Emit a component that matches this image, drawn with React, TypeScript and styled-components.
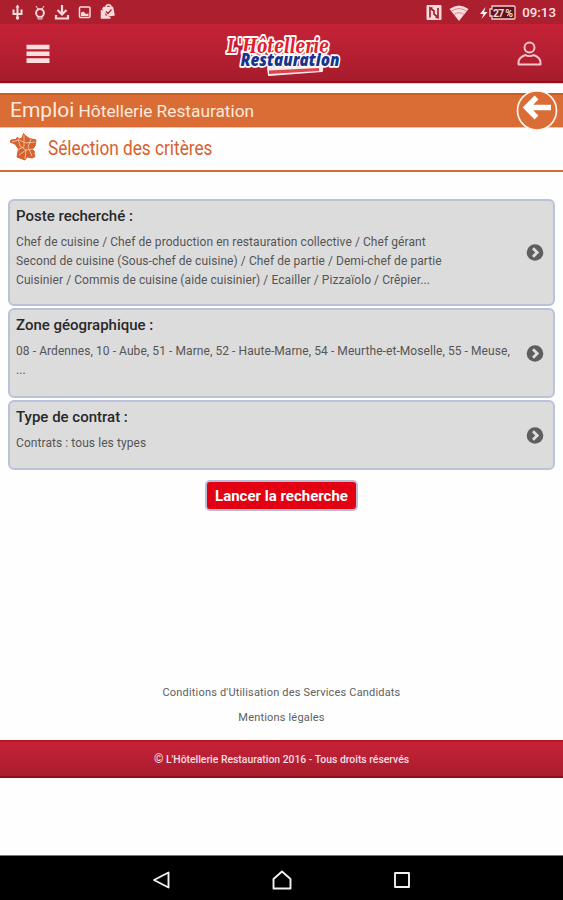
import React from 'react';
import styled, { createGlobalStyle } from 'styled-components';

const GlobalStyle = createGlobalStyle`
  * { box-sizing: border-box; }
  body { margin: 0; background: #fff; font-family: Roboto, sans-serif; }
  svg { display: block; flex: none; }
`;

const Screen = styled.div`
  width: 563px;
  height: 900px;
  display: flex;
  flex-direction: column;
  overflow: hidden;
  background: #fefefe;
`;

const StatusBar = styled.div`
  height: 24px;
  flex: none;
  display: flex;
  align-items: center;
  justify-content: space-between;
  padding: 0 7px 0 9px;
  background: #ab1f2e;
`;

const Clock = styled.span`
  padding-top: 2px;
  color: #fbe3e5;
  font-size: 13.3px;
  font-weight: 500;
  line-height: 24px;
`;

const Header = styled.header`
  height: 60px;
  flex: none;
  display: flex;
  align-items: center;
  justify-content: space-between;
  padding: 0 20px 0 26px;
  background: linear-gradient(#c62237, #a51c2c);
  border-bottom: 1px solid #f6c9cc;
  box-shadow: inset 0 -2px 0 #960f18;
`;

const TitleBar = styled.div`
  height: 35px;
  flex: none;
  margin-top: 9px;
  display: flex;
  align-items: center;
  justify-content: space-between;
  padding: 0 5px 0 10px;
  background: #d96d35;
  border-top: 2px solid #cd5a1f;
  border-bottom: 1px solid #f3c3a8;
`;

const Title = styled.h1`
  margin: -2px 0 0;
  color: #fdeade;
  font-size: 21px;
  line-height: 32px;
  font-weight: 400;
`;

const TitleSmall = styled.span`
  margin-left: -1px;
  font-size: 17.3px;
`;

const SectionBar = styled.div`
  height: 44px;
  flex: none;
  display: flex;
  align-items: center;
  gap: 11px;
  padding: 0 10px 4px;
  border-bottom: 2px solid #d66a3a;
`;

const SectionTitle = styled.h2`
  margin: 2px 0 0;
  color: #d5622c;
  font-size: 20px;
  line-height: 36px;
  font-weight: 400;
  transform: scaleX(0.86);
  transform-origin: left;
  white-space: nowrap;
`;

const Criteria = styled.main`
  display: flex;
  flex-direction: column;
  gap: 2px;
  padding: 27px 8px 0;
`;

const Card = styled.button<{ $height: number }>`
  height: ${(p) => p.$height}px;
  display: flex;
  align-items: center;
  justify-content: space-between;
  padding: 0 9px 0 6px;
  border: 2px solid #bac2d9;
  border-radius: 6px;
  background: #dcdcdc;
  font-family: inherit;
  text-align: left;
`;

const CardText = styled.div`
  align-self: flex-start;
  padding-top: 5px;
`;

const CardTitle = styled.h3`
  margin: 0 0 6px;
  color: #292929;
  font-size: 15px;
  line-height: 21px;
  font-weight: 500;
`;

const CardLine = styled.div`
  color: #555;
  font-size: 12px;
  line-height: 19px;
  letter-spacing: 0.075px;
  white-space: nowrap;
`;

const SearchButton = styled.button`
  align-self: center;
  width: 153px;
  height: 31px;
  margin-top: 8px;
  padding: 0;
  border: 2px solid #b9bfd6;
  border-radius: 5px;
  background: #e30013;
  color: #fff;
  font-family: inherit;
  font-size: 15px;
  font-weight: 700;
  line-height: 28px;
  white-space: nowrap;
`;

const Links = styled.nav`
  margin-top: 169px;
  display: flex;
  flex-direction: column;
  align-items: center;
`;

const Link = styled.a`
  color: #606060;
  font-size: 11px;
  line-height: 25px;
  letter-spacing: 0.18px;
`;

const Footer = styled.footer`
  height: 38px;
  flex: none;
  margin-top: 10px;
  background: linear-gradient(#c62237, #a91c2e);
  border-top: 2px solid #bd1322;
  border-bottom: 2px solid #980b19;
  color: #f8dfe1;
  font-size: 10.4px;
  font-weight: 500;
  line-height: 34px;
  text-align: center;
`;

const Copyright = styled.span`
  font-size: 12px;
`;

const NavBar = styled.div`
  height: 45px;
  flex: none;
  margin-top: auto;
  display: flex;
  justify-content: space-between;
  align-items: center;
  padding: 3px 151px 0 152px;
  background: #000;
  border-top: 1px solid #777;
`;

const StatusIcons = () => (
  <svg width="110" height="24" viewBox="9 0 110 24" fill="none" stroke="#f8dcdc" strokeWidth="1.5">
    <path d="M17.500 6v13M13.500 9.500v4.500h8V9.500" strokeWidth="2" />
    <path d="M17.500 4.500l2 3h-4z" fill="#f8dcdc" stroke="none" />
    <circle cx="17.500" cy="18" r="1.700" fill="#f8dcdc" stroke="none" />
    <path d="M36 6l2 3M44 6l-2 3M37 9h6M38 17v2h4v-2" strokeWidth="1" />
    <circle cx="40" cy="13" r="3.900" strokeWidth="1.900" />
    <path d="M62 5v9M57.500 10l4.500 4.500 4.500-4.500" strokeWidth="2.200" />
    <path d="M56 15v3.500h12V15" strokeWidth="2.200" />
    <rect x="79.500" y="7" width="10.500" height="10.500" rx="1" />
    <path d="M81 16v-3.500l2.500-1 2.500 2.500 2.500-.5V16z" fill="#f8dcdc" stroke="none" />
    <path d="M104 7.500h8.500l1.500 7.500-9 1.500-2-8zM101.500 10v8h9" fill="#f8dcdc" />
    <path d="M106 7c0-3 5-3 5 0" />
    <path d="M106 11.500l2 2 3.500-4" stroke="#ab1f2e" strokeWidth="1.200" />
  </svg>
);

const StatusRight = styled.div`
  display: flex;
  align-items: center;
  gap: 6px;
`;

const SystemIcons = () => (
  <svg width="91" height="24" viewBox="425 0 91 24">
    <rect x="426.500" y="5" width="15" height="15" rx="1" fill="#f8dcdc" />
    <path d="M430 17.500V8l4 3v3l4 3.500V8M430 8h2.500M438 17.500h-2.500" fill="none" stroke="#ab1f2e" strokeWidth="1.700" />
    <path d="M449.500 9Q459 2 468.500 9L459 21z" fill="#f8dcdc" />
    <path d="M451 11.500q8-6 16 0M454 14.500q5-3.500 10 0" fill="none" stroke="#c9747b" strokeWidth=".8" />
    <path d="M485.500 7l-5.500 7h3.500l-2 5 6-7h-3.500z" fill="#fff" />
    <path d="M492 6h22a1 1 0 0 1 1 1v11a1 1 0 0 1-1 1h-22v-3h-2V9h2z" fill="#63121b" stroke="#f3cfd1" strokeWidth="1.300" />
    <text x="493" y="16.500" fontSize="10.500" fontWeight="700" fontFamily="Roboto" fill="#f5dcdd" textLength="20">27 %</text>
  </svg>
);

const Logo = () => (
  <svg width="136" height="56" viewBox="215 25 136 56" strokeLinejoin="round" paintOrder="stroke" stroke="#fff" fontStyle="italic" fontWeight="800">
    <path d="M267 67l54-2v5l-53 4z" fill="#fbe8e8" stroke="#fbe8e8" strokeWidth="2" />
    <path d="M268 69.500l50-2.500v3l-50 3z" fill="#dc4351" stroke="none" />
    <text x="226" y="52" fontSize="20" fontFamily="DejaVu Serif, serif" fill="#e11e2d" strokeWidth="4" textLength="102" lengthAdjust="spacingAndGlyphs">L'Hôtellerie</text>
    <text x="239.500" y="65" fontSize="18" fontFamily="Open Sans, sans-serif" fill="#17358f" strokeWidth="3.500" textLength="99" lengthAdjust="spacingAndGlyphs">Restauration</text>
  </svg>
);

const MenuIcon = () => (
  <svg width="24" height="20" viewBox="0 0 24 20">
    <path d="M.5 3h23M.5 9.800h23M.5 16.600h23" stroke="#fbdde0" strokeWidth="4.600" />
  </svg>
);

const UserIcon = () => (
  <svg width="26" height="26" viewBox="0 0 26 26" fill="none" stroke="#f5c9cb" strokeWidth="1.900">
    <circle cx="12.500" cy="6.500" r="5" />
    <path d="M1.500 23.500v-2c0-4 3-6 7-7.500 2 1.500 6 1.500 8 0 4 1.500 7 3.500 7 7.500v2z" strokeLinejoin="round" />
  </svg>
);

const BackIcon = () => (
  <svg width="42" height="42" viewBox="0 0 42 42" fill="none">
    <circle cx="21" cy="20.500" r="19.500" fill="#d96d35" stroke="#fff3ea" strokeWidth="1.700" />
    <path d="M11 17.500h24M20.500 7.500l-10 10 10 10" stroke="#fff" strokeWidth="5.400" />
  </svg>
);

const FranceIcon = () => (
  <svg width="27" height="28" viewBox="0 0 27 28">
    <path d="M13.500.5l3 3 3 2 6.500 1.500-1 6-2.500 3.500 2 2-.5 2 1 3-3 1.500-5-1-2 3-8-3 1.500-8-3.500-5-5-2L1 7l5-.5 1-2 2.500 1.500 2.500-1z" fill="#d5622c" stroke="#d5622c" />
    <path d="M2 9l7-2 7 3 9-1M14 2v12l-7 3M8 6l2 7 6 4 7-1M9 22l7-5-1 9M21 6l-3 8 4 9" fill="none" stroke="#f5cfbb" strokeWidth=".8" />
  </svg>
);

const ChevronIcon = () => (
  <svg width="18" height="17" viewBox="0 0 17 17">
    <circle cx="8.500" cy="8.500" r="8.300" fill="#5e5e5e" />
    <path d="M6.500 4.300l4.200 4.200-4.200 4.200" fill="none" stroke="#dedede" strokeWidth="2.800" />
  </svg>
);

const NavIcon = ({ d }: { d: string }) => (
  <svg width="20" height="20" viewBox="0 0 20 20">
    <path d={d} fill="none" stroke="#f2f2f2" strokeWidth="1.900" strokeLinejoin="round" />
  </svg>
);

const criteria = [
  {
    title: 'Poste recherché :',
    height: 107,
    lines: [
      'Chef de cuisine / Chef de production en restauration collective / Chef gérant',
      'Second de cuisine (Sous-chef de cuisine) / Chef de partie / Demi-chef de partie',
      'Cuisinier / Commis de cuisine (aide cuisinier) / Ecailler / Pizzaïolo / Crêpier...',
    ],
  },
  {
    title: 'Zone géographique :',
    height: 90,
    lines: ['08 - Ardennes, 10 - Aube, 51 - Marne, 52 - Haute-Marne, 54 - Meurthe-et-Moselle, 55 - Meuse,', '...'],
  },
  { title: 'Type de contrat :', height: 70, lines: ['Contrats : tous les types'] },
];

export default function App() {
  return (
    <Screen>
      <GlobalStyle />
      <StatusBar>
        <StatusIcons />
        <StatusRight>
          <SystemIcons />
          <Clock>09:13</Clock>
        </StatusRight>
      </StatusBar>
      <Header>
        <MenuIcon />
        <Logo />
        <UserIcon />
      </Header>
      <TitleBar>
        <Title>
          Emploi <TitleSmall>Hôtellerie Restauration</TitleSmall>
        </Title>
        <BackIcon />
      </TitleBar>
      <SectionBar>
        <FranceIcon />
        <SectionTitle>Sélection des critères</SectionTitle>
      </SectionBar>
      <Criteria>
        {criteria.map((c) => (
          <Card key={c.title} $height={c.height}>
            <CardText>
              <CardTitle>{c.title}</CardTitle>
              {c.lines.map((line) => (
                <CardLine key={line}>{line}</CardLine>
              ))}
            </CardText>
            <ChevronIcon />
          </Card>
        ))}
        <SearchButton>Lancer la recherche</SearchButton>
      </Criteria>
      <Links>
        <Link>Conditions d'Utilisation des Services Candidats</Link>
        <Link>Mentions légales</Link>
      </Links>
      <Footer>
        <Copyright>©</Copyright> L'Hôtellerie Restauration 2016 - Tous droits réservés
      </Footer>
      <NavBar>
        <NavIcon d="M16.500 2.500v15L2 10z" />
        <NavIcon d="M1.500 18.500V9L10 1.500 18.500 9v9.500z" />
        <NavIcon d="M3 3h14v14H3z" />
      </NavBar>
    </Screen>
  );
}
